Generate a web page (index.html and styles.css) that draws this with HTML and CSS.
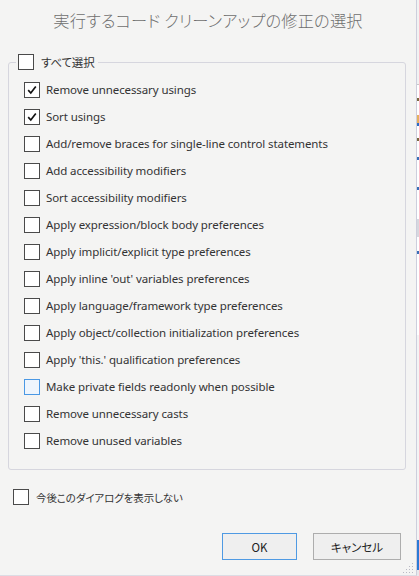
FILE: index.html
```html
<!DOCTYPE html>
<html lang="ja">
<head>
<meta charset="utf-8">
<title>コード クリーンアップ</title>
<link rel="stylesheet" href="styles.css">
</head>
<body>
<div class="screen">
  <div class="dialog">
    <h1 class="title">実行するコード クリーンアップの修正の選択</h1>
    <fieldset class="group">
      <legend class="legend"><span class="box"></span><span class="jp">すべて選択</span></legend>
      <div class="row"><span class="box checked"><svg viewBox="0 0 14 14" width="14" height="14"><path d="M3.2 7.2 L5.8 10 L10.8 3.4" fill="none" stroke="#111" stroke-width="1.7"/></svg></span><span>Remove unnecessary usings</span></div>
      <div class="row"><span class="box checked"><svg viewBox="0 0 14 14" width="14" height="14"><path d="M3.2 7.2 L5.8 10 L10.8 3.4" fill="none" stroke="#111" stroke-width="1.7"/></svg></span><span>Sort usings</span></div>
      <div class="row"><span class="box"></span><span>Add/remove braces for single-line control statements</span></div>
      <div class="row"><span class="box"></span><span>Add accessibility modifiers</span></div>
      <div class="row"><span class="box"></span><span>Sort accessibility modifiers</span></div>
      <div class="row"><span class="box"></span><span>Apply expression/block body preferences</span></div>
      <div class="row"><span class="box"></span><span>Apply implicit/explicit type preferences</span></div>
      <div class="row"><span class="box"></span><span>Apply inline 'out' variables preferences</span></div>
      <div class="row"><span class="box"></span><span>Apply language/framework type preferences</span></div>
      <div class="row"><span class="box"></span><span>Apply object/collection initialization preferences</span></div>
      <div class="row"><span class="box"></span><span>Apply 'this.' qualification preferences</span></div>
      <div class="row"><span class="box hover"></span><span>Make private fields readonly when possible</span></div>
      <div class="row"><span class="box"></span><span>Remove unnecessary casts</span></div>
      <div class="row"><span class="box"></span><span>Remove unused variables</span></div>
    </fieldset>
    <div class="dontshow"><span class="box"></span><span class="jp">今後このダイアログを表示しない</span></div>
    <div class="buttons">
      <button class="btn ok">OK</button>
      <button class="btn cancel">キャンセル</button>
    </div>
    <svg class="grip" width="11" height="11" viewBox="0 0 11 11">
      <g fill="#b9b9c4">
        <rect x="9" y="1" width="1" height="1"/>
        <rect x="6" y="4" width="1" height="1"/><rect x="9" y="4" width="1" height="1"/>
        <rect x="3" y="7" width="1" height="1"/><rect x="6" y="7" width="1" height="1"/><rect x="9" y="7" width="1" height="1"/>
        <rect x="0" y="10" width="1" height="1"/><rect x="3" y="10" width="1" height="1"/><rect x="6" y="10" width="1" height="1"/><rect x="9" y="10" width="1" height="1"/>
      </g>
    </svg>
  </div>
  <div class="behind">
    <div class="b-gap"></div>
    <div class="b-line"></div>
    <div class="b-white">
      <span class="mark m1"></span>
      <span class="mark m2"></span>
      <span class="mark m3"></span>
      <span class="mark m4"></span>
      <span class="mark m5"></span>
      <span class="mark m6"></span>
      <span class="mark m7"></span>
      <span class="mark m8"></span>
    </div>
    <div class="b-fill"></div>
    <div class="b-blue"></div>
    <div class="b-end"></div>
  </div>
</div>
</body>
</html>
```
FILE: styles.css
```css
html, body {
  margin: 0;
  padding: 0;
}
body {
  width: 419px;
  height: 576px;
  overflow: hidden;
  background: #f4f4f4;
  font-family: "Noto Sans", "Noto Sans CJK JP", sans-serif;
  font-size: 11.5px;
  letter-spacing: -0.1px;
  color: #333;
}
.screen {
  display: flex;
  width: 419px;
  height: 576px;
}
.dialog {
  position: relative;
  width: 416px;
  height: 575px;
  border-right: 1px solid #cdcedc;
  border-bottom: 1px solid #dcdce4;
  background: #f4f4f3;
  display: flex;
  flex-direction: column;
  flex: none;
}
.jp, .title, .btn {
  font-family: "Noto Sans CJK JP", "Noto Sans", sans-serif;
  font-feature-settings: "palt";
}
.title {
  margin: 8px 0 0;
  height: 24px;
  line-height: 24px;
  text-align: center;
  font-size: 16.2px;
  font-weight: 300;
  color: #6e6e6e;
  letter-spacing: 0.2px;
}
.group {
  margin: 22px 10px 0 8px;
  padding: 6px 10px 15px 15px;
  border: 1px solid #d6d6de;
  border-radius: 3px;
  min-width: 0;
}
.legend {
  display: flex;
  align-items: center;
  gap: 7px;
  margin-left: -8px;
  padding: 0 4px 0 2px;
  height: 16px;
  line-height: 16px;
}
.legend .jp {
  font-size: 11.5px;
  letter-spacing: -0.2px;
}
.row {
  height: 27px;
  display: flex;
  align-items: center;
  gap: 6px;
  white-space: nowrap;
}
.box {
  width: 14px;
  height: 14px;
  border: 1px solid #4a4a4a;
  background: #fff;
  flex: none;
  display: flex;
  align-items: center;
  justify-content: center;
}
.box svg { display: block; }
.box.hover {
  border-color: #4a98e4;
  background: #eef5fd;
}
.dontshow {
  display: flex;
  align-items: center;
  gap: 7px;
  margin: 19px 0 0 13px;
  height: 16px;
}
.dontshow .jp {
  font-size: 10.5px;
  letter-spacing: -0.1px;
}
.buttons {
  display: flex;
  justify-content: flex-end;
  gap: 16px;
  margin: 28px 15px 0 0;
}
.btn {
  height: 27px;
  font-size: 11.5px;
  color: #222;
  background: #efefef;
  border: 1px solid #adadad;
  padding: 0;
  margin: 0;
}
.btn.ok {
  width: 75px;
  border-color: #4f9ae3;
}
.btn.cancel {
  width: 88px;
}
.grip {
  position: absolute;
  right: 2px;
  bottom: 2px;
}
.behind {
  flex: 1;
  display: flex;
  flex-direction: column;
  background: #f0f0f0;
}
.b-gap { height: 84px; background: #f2f2f2; }
.b-line { height: 1px; background: #c8c8c8; }
.b-white {
  height: 250px;
  background: #ffffff;
  position: relative;
}
.mark {
  position: absolute;
  left: 0;
  width: 2px;
  height: 3px;
  background: #3a6fb8;
}
.m1 { top: 13px; background: #7a6a40; }
.m2 { top: 30px; height: 8px; background: #e6b060; width: 3px; }
.m3 { top: 38px; background: #2d6bc4; }
.m4 { top: 53px; background: #7a6a40; }
.m5 { top: 72px; }
.m6 { top: 102px; }
.m7 { top: 134px; height: 18px; background: #d8d8de; width: 3px; }
.m8 { top: 166px; }
.b-fill { height: 205px; background: #f4f4f4; }
.b-blue { height: 30px; background: #2b7ad6; }
.b-end { flex: 1; background: #e8e8ec; }
```
